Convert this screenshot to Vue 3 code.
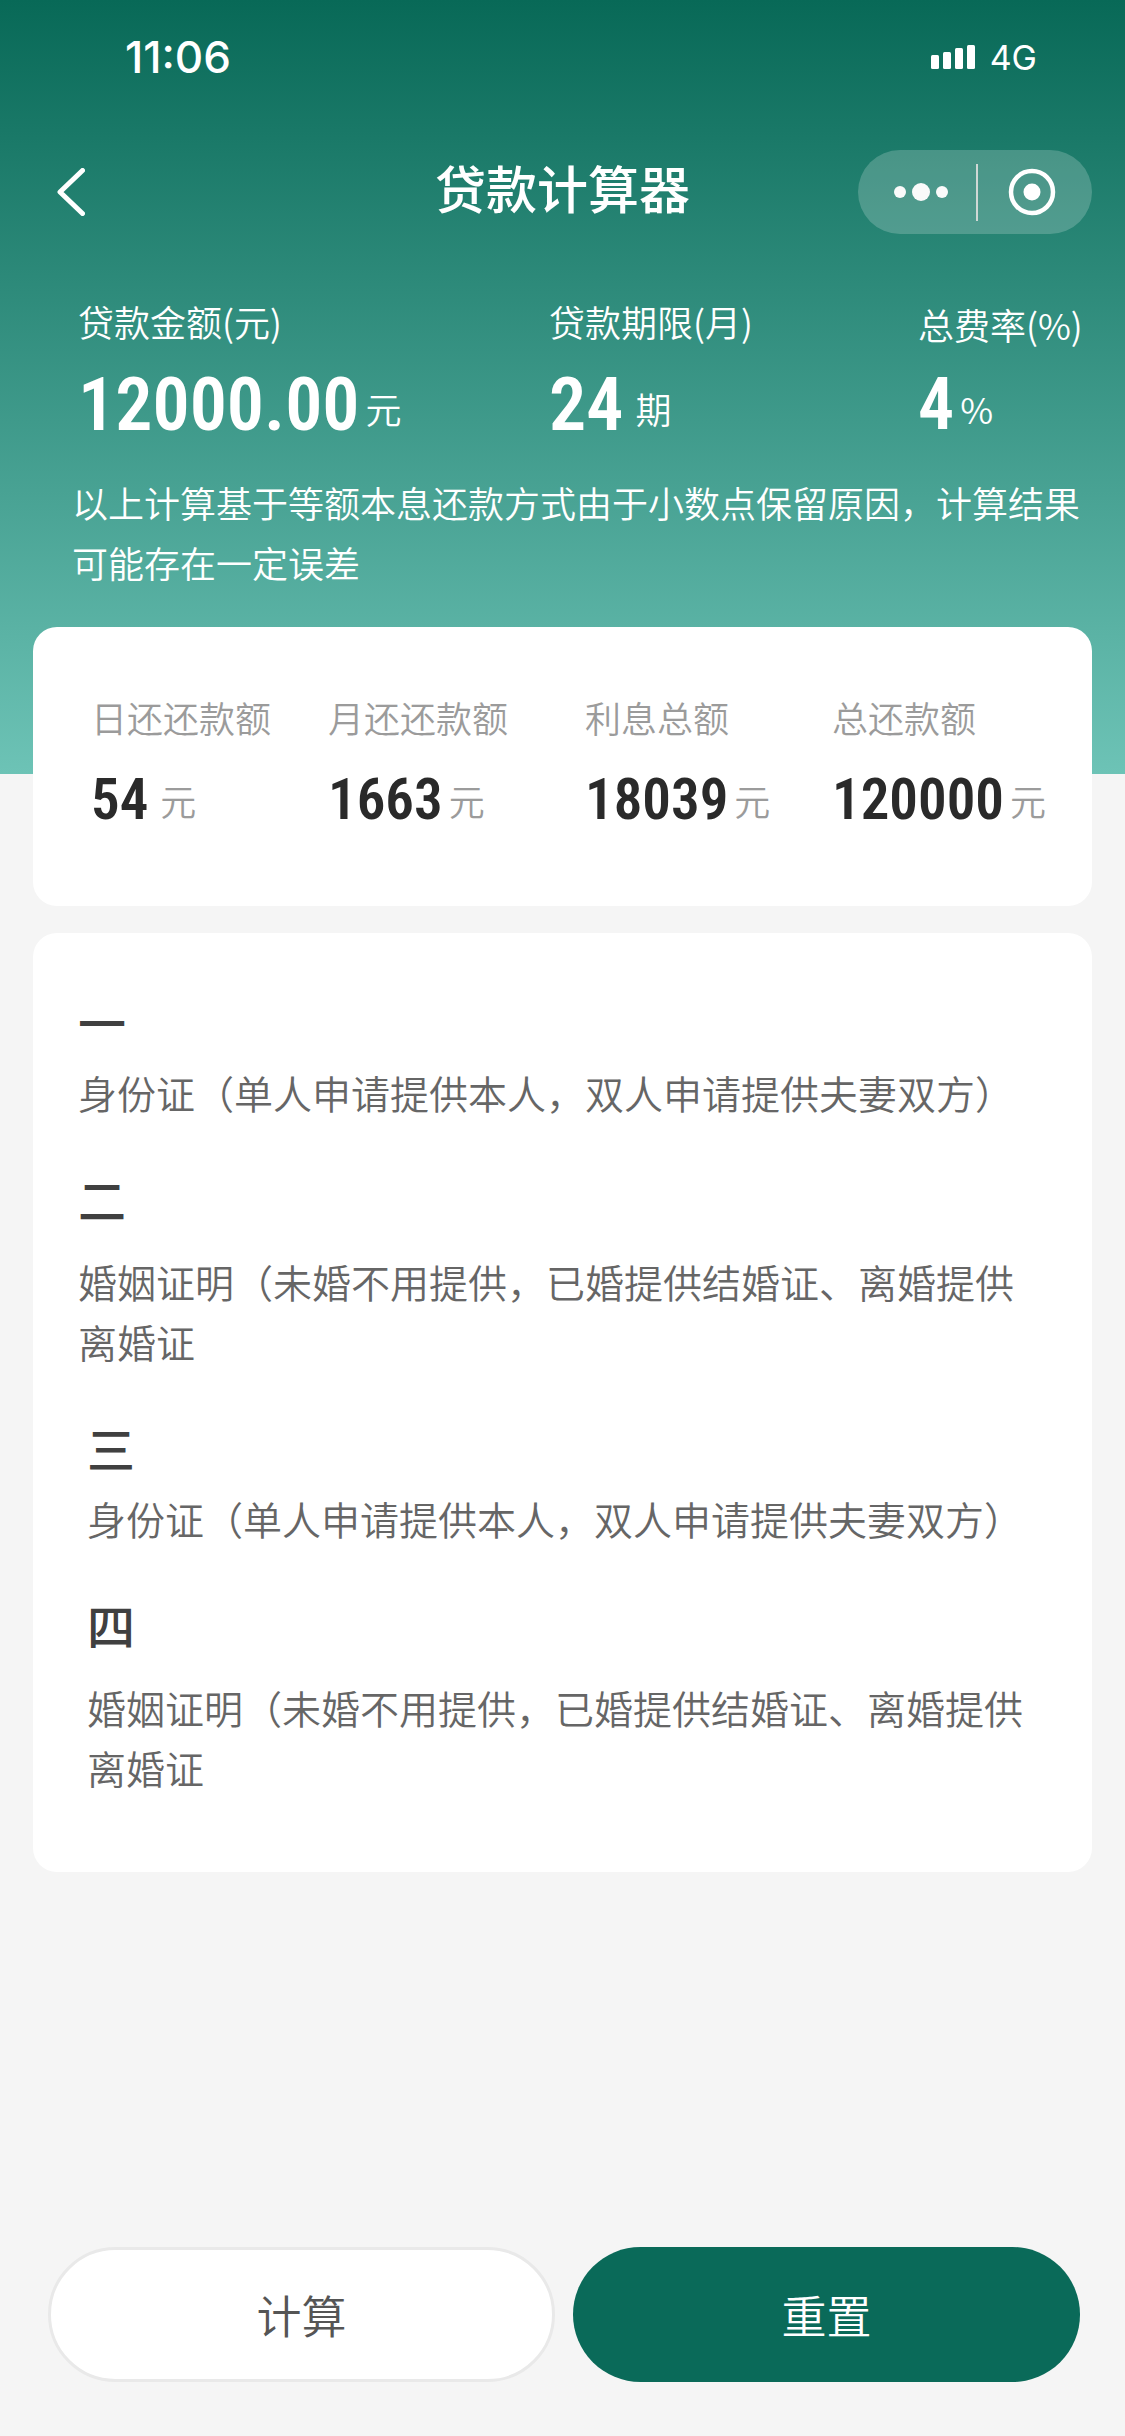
<script setup>
const loan = [
  { label: '贷款金额(元)', value: '12000.00', unit: '元' },
  { label: '贷款期限(月)', value: '24', unit: '期', spaced: true },
  { label: '总费率(%)', value: '4', unit: '%', small: true }
]

const results = [
  { label: '日还还款额', value: '54', unit: '元', spaced: true },
  { label: '月还还款额', value: '1663', unit: '元' },
  { label: '利息总额', value: '18039', unit: '元' },
  { label: '总还款额', value: '120000', unit: '元' }
]

const identity = '身份证（单人申请提供本人，双人申请提供夫妻双方）'
const marriage = '婚姻证明（未婚不用提供，已婚提供结婚证、离婚提供离婚证'

const materials = [
  { title: '一', text: identity },
  { title: '二', text: marriage, roomy: true },
  { title: '三', text: identity, inset: true },
  { title: '四', text: marriage, roomy: true, inset: true }
]
</script>

<template>
  <div class="page">
    <header class="hero">
      <div class="status">
        <time class="clock">11:06</time>
        <div class="network">
          <svg class="signal" viewBox="0 0 45 24" aria-hidden="true">
            <rect x="0" y="10" width="8" height="14" rx="1.5" />
            <rect x="12" y="7" width="8" height="17" rx="1.5" />
            <rect x="24" y="3" width="8" height="21" rx="1.5" />
            <rect x="36" y="0" width="8" height="24" rx="1.5" />
          </svg>
          <span>4G</span>
        </div>
      </div>

      <nav class="navbar">
        <button class="back" type="button" aria-label="返回">
          <svg viewBox="0 0 28 48" aria-hidden="true">
            <path d="M25.5 2.5 L3 24 L25.5 45.5" />
          </svg>
        </button>
        <h1>贷款计算器</h1>
        <div class="capsule">
          <button type="button" aria-label="更多">
            <svg class="more" viewBox="0 0 54 18" aria-hidden="true">
              <circle cx="6" cy="9" r="6" />
              <circle cx="27" cy="9" r="9" />
              <circle cx="48" cy="9" r="6" />
            </svg>
          </button>
          <button type="button" aria-label="关闭">
            <svg class="target" viewBox="0 0 48 48" aria-hidden="true">
              <circle class="ring" cx="24" cy="24" r="21" />
              <circle cx="24" cy="24" r="8.5" />
            </svg>
          </button>
        </div>
      </nav>

      <dl class="loan">
        <div v-for="item in loan" :key="item.label" :class="{ small: item.small }">
          <dt>{{ item.label }}</dt>
          <dd :class="{ spaced: item.spaced }">
            <strong>{{ item.value }}</strong><span>{{ item.unit }}</span>
          </dd>
        </div>
      </dl>
      <p class="note">以上计算基于等额本息还款方式由于小数点保留原因，计算结果可能存在一定误差</p>
    </header>

    <main class="content">
      <dl class="card results">
        <div v-for="item in results" :key="item.label">
          <dt>{{ item.label }}</dt>
          <dd :class="{ spaced: item.spaced }">
            <strong>{{ item.value }}</strong><span>{{ item.unit }}</span>
          </dd>
        </div>
      </dl>

      <div class="card materials">
        <section
          v-for="item in materials"
          :key="item.title"
          :class="{ roomy: item.roomy, inset: item.inset }"
        >
          <h2>{{ item.title }}</h2>
          <p>{{ item.text }}</p>
        </section>
      </div>
    </main>

    <footer class="actions">
      <button class="calculate" type="button">计算</button>
      <button class="reset" type="button">重置</button>
    </footer>
  </div>
</template>

<style>
body {
  background: #f5f5f5;
}
</style>

<style scoped>
.page {
  display: flex;
  flex-direction: column;
  min-height: 100vh;
  font-family: 'Noto Sans CJK SC', sans-serif;
  font-weight: 350;
  background: #f5f5f5;
}

h1,
h2,
p,
dl,
dd {
  margin: 0;
}

button {
  padding: 0;
  border: 0;
  background: none;
  font: inherit;
}

svg {
  display: block;
}

.hero {
  padding-bottom: 182px;
  color: #fff;
  background: linear-gradient(#086957, #6dc3b6);
}

.status {
  display: flex;
  align-items: center;
  justify-content: space-between;
  height: 114px;
  padding: 0 88px 0 125px;
  font-family: Inter, sans-serif;
}

.clock {
  font-size: 44px;
  font-weight: 500;
}

.network {
  display: flex;
  align-items: center;
  gap: 14px;
  font-size: 34px;
  font-weight: 400;
}

.signal {
  width: 45px;
  height: 24px;
  fill: #fff;
}

.navbar {
  display: grid;
  grid-template-columns: 1fr auto 1fr;
  align-items: center;
  margin-top: 36px;
  padding: 0 33px;
}

.back {
  justify-self: start;
  margin-left: 24px;
}

.back svg {
  width: 28px;
  height: 48px;
  fill: none;
  stroke: #fff;
  stroke-width: 5;
  stroke-linecap: round;
  stroke-linejoin: round;
}

h1 {
  padding-bottom: 10px;
  font-size: 51px;
  font-weight: 500;
  line-height: 72px;
}

.capsule {
  display: grid;
  grid-template-columns: 1fr 1fr;
  align-items: center;
  justify-self: end;
  box-sizing: border-box;
  width: 234px;
  height: 84px;
  padding: 0 6px 0 8px;
  border-radius: 42px;
  background: rgba(255, 255, 255, 0.2);
}

.capsule button {
  display: flex;
  align-items: center;
  justify-content: center;
  height: 57px;
}

.capsule button + button {
  border-left: 2px solid #cfd8d5;
}

.more {
  width: 54px;
  height: 18px;
  fill: #fafafa;
}

.target {
  width: 48px;
  height: 48px;
  fill: #fff;
}

.ring {
  fill: none;
  stroke: #fff;
  stroke-width: 4.5;
}

.loan {
  display: grid;
  grid-template-columns: 471fr 369fr 207fr;
  padding: 60px 0 0 78px;
  font-size: 36px;
  line-height: 54px;
  white-space: nowrap;
}

dd {
  display: flex;
  align-items: flex-end;
  gap: 6px;
}

dd.spaced {
  gap: 12px;
}

dd strong {
  font-family: 'Roboto Condensed', Roboto, sans-serif;
  font-weight: 600;
}

.loan dd {
  padding-top: 27px;
}

.loan dd strong {
  font-size: 74px;
  line-height: 60px;
}

.loan .small {
  padding-top: 3px;
}

.loan .small dd {
  padding-top: 24px;
}

.loan .small strong {
  font-size: 72px;
}

.note {
  padding: 37px 33px 0 72px;
  font-size: 36px;
  line-height: 60px;
}

.content {
  display: flex;
  flex-direction: column;
  gap: 27px;
  margin-top: -147px;
  padding: 0 33px;
}

.card {
  border-radius: 24px;
  background: #fff;
}

.results {
  display: grid;
  grid-template-columns: 237fr 257fr 247fr 260fr;
  padding: 63px 0 79px 58px;
  font-size: 36px;
  line-height: 54px;
  color: #9b9b9b;
  white-space: nowrap;
}

.results dd {
  padding-top: 29px;
}

.results dd strong {
  font-size: 57px;
  color: #2a2a2a;
}

.materials {
  display: flex;
  flex-direction: column;
  gap: 46px;
  padding: 58px 45px 75px;
  color: #666;
}

.materials section {
  display: flex;
  flex-direction: column;
  gap: 11px;
}

.materials .roomy {
  gap: 23px;
}

.materials .inset {
  padding-left: 9px;
}

h2 {
  font-size: 48px;
  font-weight: 500;
  line-height: 60px;
  color: #404040;
}

.materials p {
  font-size: 39px;
  line-height: 60px;
}

.actions {
  display: grid;
  grid-template-columns: 1fr 1fr;
  gap: 18px;
  margin-top: auto;
  padding: 54px 45px 54px 48px;
}

.actions button {
  height: 135px;
  border-radius: 68px;
  font-size: 45px;
}

.actions .calculate {
  border: 3px solid #e9e9e9;
  color: #555;
  background: #fff;
}

.actions .reset {
  color: #fff;
  background: #0a6a59;
}
</style>
